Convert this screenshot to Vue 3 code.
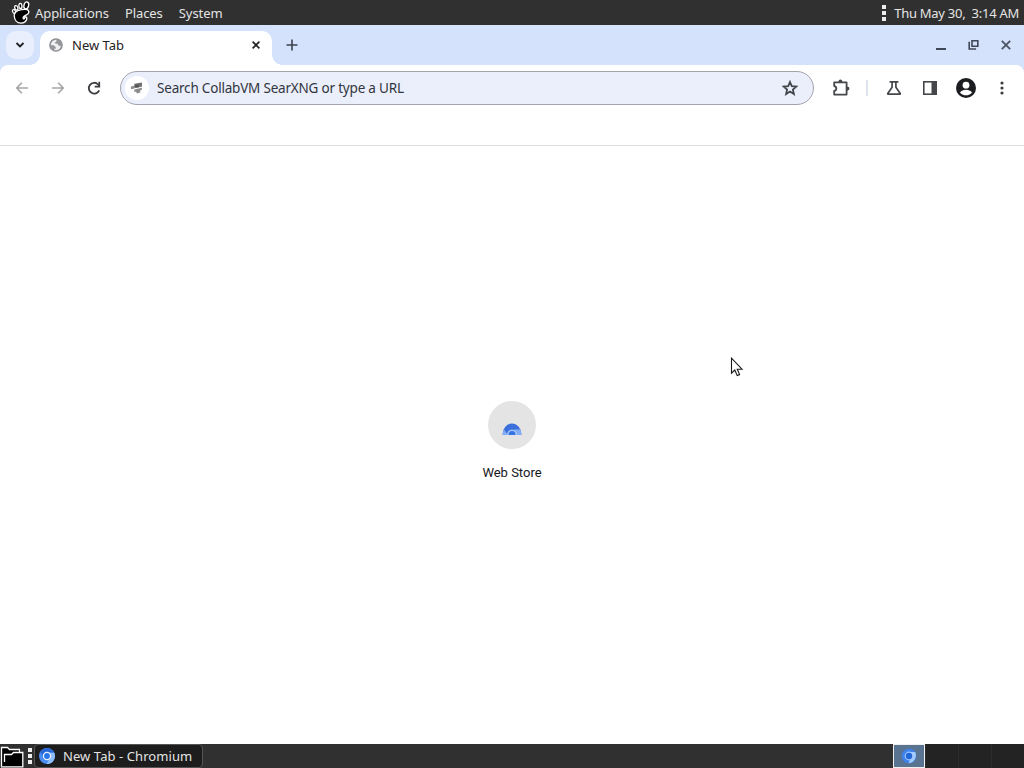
<script setup>
    import { ref } from 'vue';

    const menus = ["Applications", "Places", "System"];
    const clock = ref("Thu May 30,\u00a0 3:14 AM");
    const tabTitle = ref("New Tab");
    const placeholder = "Search CollabVM SearXNG or type a URL";
    const workspaces = [1, 2, 3, 4];
    const activeWorkspace = ref(1);
</script>

<template>
    <div class="desktop">
        <header class="panel">
            <svg class="foot" width="21" height="24" viewBox="0 0 21 24">
                <path d="M3.2 14.6C3 11 6.8 9.4 10.6 8.7C15 7.7 18.2 8.7 17.8 11.6C17.4 14 13 14 12.2 16.2C11.8 17.4 12.4 18.2 13.2 17.8C14 17 13.4 15.8 14.9 15.8C16.8 16.2 16 21.6 10.2 22.2C6 22.4 3.5 18.8 3.2 14.6Z" />
                <ellipse cx="3" cy="10.4" rx="1.4" ry="1.9" transform="rotate(-28 3 10.4)" />
                <ellipse cx="5.3" cy="6.8" rx="1.5" ry="2.3" transform="rotate(-18 5.3 6.8)" />
                <ellipse cx="9.4" cy="4.9" rx="1.5" ry="2.6" transform="rotate(-5 9.4 4.9)" />
                <ellipse cx="15.3" cy="4.4" rx="2.3" ry="3.5" transform="rotate(16 15.3 4.4)" />
            </svg>
            <nav class="menus">
                <span v-for="menu in menus" :key="menu">{{ menu }}</span>
            </nav>
            <div class="grip"><i></i><i></i><i></i></div>
            <span class="clock">{{ clock }}</span>
        </header>

        <section class="tabStrip">
            <button class="tabSearch">
                <svg width="10" height="8" viewBox="0 0 10 8"><path d="M1.5 2L5 5.5L8.5 2" fill="none" stroke="#1f2024" stroke-width="1.8" /></svg>
            </button>
            <div class="tab">
                <svg width="14" height="14" viewBox="0 0 14 14">
                    <circle cx="7" cy="7" r="6" fill="#eeeff0" stroke="#8c8f93" stroke-width="1.7" />
                    <path d="M1.4 7.3H4.8L6.8 9.2V10.7H5.2V12.8C2.8 12 1.2 10 1.4 7.3ZM7.7 1.3C10.8 1.6 12.9 4.1 12.7 7.3L10.9 8.3L9 7.1V5.7H6.8L5.8 4.7L7.3 3.6Z" fill="#94979b" />
                </svg>
                <span class="tabTitle">{{ tabTitle }}</span>
                <svg class="tabClose" width="8" height="8" viewBox="0 0 8 8"><path d="M.6.6L7.4 7.4M7.4.6L.6 7.4" stroke="#202124" stroke-width="1.6" /></svg>
            </div>
            <button class="newTab">
                <svg width="12" height="12" viewBox="0 0 12 12"><path d="M6 .5V11.5M.5 6H11.5" stroke="#3c4350" stroke-width="1.6" /></svg>
            </button>
            <div class="windowButtons">
                <svg width="12" height="12" viewBox="0 0 12 12"><path d="M1 10H11" stroke="#3f4757" stroke-width="2" /></svg>
                <svg width="12" height="12" viewBox="0 0 12 12"><path d="M4 1.7H9.8V7.3H4ZM1.2 2.8V10H8.1" fill="none" stroke="#3f4757" stroke-width="1.6" /></svg>
                <svg width="12" height="12" viewBox="0 0 12 12"><path d="M1.8 1.8L10.2 10.2M10.2 1.8L1.8 10.2" stroke="#4b5364" stroke-width="1.8" /></svg>
            </div>
        </section>

        <div class="toolbarArea">
            <section class="toolbar">
                <button class="tool">
                    <svg width="16" height="16" viewBox="0 0 16 16"><path d="M14 8H3M8 2.7L2.7 8L8 13.3" fill="none" stroke="#a5a6a9" stroke-width="1.6" /></svg>
                </button>
                <button class="tool">
                    <svg width="16" height="16" viewBox="0 0 16 16"><path d="M2 8H13M8 2.7L13.3 8L8 13.3" fill="none" stroke="#a5a6a9" stroke-width="1.6" /></svg>
                </button>
                <button class="tool">
                    <svg width="16" height="16" viewBox="0 0 16 16">
                        <path d="M13.2 10.3A5.4 5.4 0 1 1 12 4.3L13 5.6" fill="none" stroke="#3c3d40" stroke-width="1.8" />
                        <path d="M13.3 1.8V6.6H8.7" fill="none" stroke="#3c3d40" stroke-width="1.7" />
                    </svg>
                </button>
                <div class="omnibox">
                    <span class="engine">
                        <svg width="14" height="14" viewBox="0 0 14 14">
                            <path d="M4.4 2.8L8.8 2L12 1.6V5.6L8.4 6.6L4 6.8Z" fill="#6f7072" />
                            <path d="M.8 5.6L4.5 4.8V7.4L1 8.2ZM4.4 8.6L11.8 6.8V9L10 9.4L10.4 11.4L6.8 12.4L6.2 10.8H4Z" fill="#8c8d8f" />
                            <path d="M5.2 4.2L8.5 3.5V6.2L5.2 6.8Z" fill="#505153" />
                        </svg>
                    </span>
                    <span class="placeholder">{{ placeholder }}</span>
                    <svg class="star" width="16" height="16" viewBox="0 0 16 16"><path d="M8 2L9.8 6.2L14.3 6.6L10.9 9.6L11.9 14L8 11.6L4.1 14L5.1 9.6L1.7 6.6L6.2 6.2Z" fill="none" stroke="#45474d" stroke-width="1.8" /></svg>
                </div>
                <button class="tool extensions">
                    <svg width="20" height="20" viewBox="0 0 20 20">
                        <path d="M3.2 4.4H15.6V16.6H3.2V13C6 12.4 6 8.6 3.2 8Z" fill="none" stroke="#45474a" stroke-width="1.8" stroke-linejoin="round" />
                        <path d="M7.4 4.4A2 2.8 0 0 1 11.4 4.4ZM15.6 8.4A2.8 2 0 0 1 15.6 12.4Z" fill="#45474a" />
                    </svg>
                </button>
                <div class="divider"></div>
                <button class="tool">
                    <svg width="16" height="16" viewBox="0 0 16 16"><path d="M3.6 1.8H12.4M6.1 2V7.2L1.8 13.4Q1.5 14.2 2.4 14.2H13.6Q14.5 14.2 14.2 13.4L9.9 7.2V2" fill="none" stroke="#45474a" stroke-width="1.7" /></svg>
                </button>
                <button class="tool">
                    <svg width="16" height="16" viewBox="0 0 16 16"><rect x="1.8" y="1.8" width="12.4" height="12.4" fill="none" stroke="#45474a" stroke-width="1.6" /><path d="M9.5 2H14V14H9.5Z" fill="#45474a" /></svg>
                </button>
                <button class="tool">
                    <svg width="20" height="20" viewBox="0 0 20 20"><circle cx="10" cy="10" r="10" fill="#1c1d20" /><circle cx="10" cy="7.2" r="3.4" fill="#fff" /><path d="M4 14.4C5.3 12.6 7.5 11.8 10 11.8C12.5 11.8 14.7 12.6 16 14.4C14.7 16.2 12.5 17.3 10 17.3C7.5 17.3 5.3 16.2 4 14.4Z" fill="#fff" /></svg>
                </button>
                <button class="tool">
                    <svg width="4" height="16" viewBox="0 0 4 16" fill="#3c3d40"><circle cx="2" cy="3" r="1.6" /><circle cx="2" cy="8" r="1.6" /><circle cx="2" cy="13" r="1.6" /></svg>
                </button>
            </section>
        </div>
        <div class="bookmarksBar"></div>

        <main class="page">
            <a class="shortcut">
                <span class="tile">
                    <svg width="20" height="12" viewBox="0 0 20 12">
                        <path d="M.5 12A9.5 11.5 0 0 1 19.5 12Z" fill="#3b70dc" />
                        <path d="M.5 12Q.7 9 2 6.5L6 12ZM12 6.5H18.4Q19.4 9 19.5 12H14Z" fill="#82adf5" />
                        <path d="M5 12A5 5.5 0 0 1 15 12Z" fill="#a6c4f8" />
                        <path d="M6.5 12A3.5 4 0 0 1 13.5 12Z" fill="#3574e5" />
                    </svg>
                </span>
                <span class="label">Web Store</span>
            </a>
        </main>

        <footer class="taskbar">
            <svg class="folder" width="24" height="24" viewBox="0 0 24 24">
                <path d="M1.5 23V3.5H8.5L10.5 5.5H20.5V9.5H23V23Z" fill="#000" />
                <path d="M1.5 22.5V3.5H7.5L9.5 5.5H19.5V8.5" fill="none" stroke="#fff" stroke-width="1.3" />
                <path d="M4.5 18V10.5H11.5L13.5 8.5H22.8V22.8H1" fill="none" stroke="#fff" stroke-width="1.3" />
            </svg>
            <div class="grip"><i></i><i></i><i></i></div>
            <button class="task">
                <svg width="16" height="16" viewBox="0 0 16 16">
                    <circle cx="8" cy="8" r="8" fill="#4a8df2" />
                    <path d="M8 4.4H15.1A8 8 0 0 1 7.5 16L11.2 9.6Z" fill="#8fbefc" />
                    <path d="M1.2 4A8 8 0 0 1 15.1 4.4H8L4.8 9.6Z" fill="#2868d6" />
                    <circle cx="8" cy="8" r="4.2" fill="#e8f2ff" /><circle cx="8" cy="8" r="2.9" fill="#2875e8" />
                </svg>
                <span>{{ tabTitle }} - Chromium</span>
            </button>
            <div class="pager">
                <div v-for="n in workspaces" :key="n" class="workspace" :class="{ active: n == activeWorkspace }">
                    <svg v-if="n == activeWorkspace" width="16" height="16" viewBox="0 0 16 16">
                        <circle cx="8" cy="8" r="7.3" fill="#3e82ee" />
                        <path d="M8 4H14.2C16.5 9 12.8 14.8 7.5 15.3L10 10Z" fill="#a3ccff" />
                        <circle cx="8" cy="8" r="4.4" fill="#9fc7ff" /><circle cx="8" cy="8" r="3.2" fill="#2267d8" />
                    </svg>
                </div>
            </div>
        </footer>

        <svg class="cursor" width="14" height="20" viewBox="0 0 14 20"><path d="M1.5 1.2V16.2L4.8 13L7.2 18.6L9.6 17.6L7.3 12.2H12Z" fill="#fff" stroke="#17181a" stroke-width="1.1" /></svg>
    </div>
</template>

<style>
    body {
        margin: 0;
        overflow: hidden;
    }
</style>

<style scoped>
    .desktop {
        position: relative;
        width: 1024px;
        height: 768px;
        display: flex;
        flex-direction: column;
        background-color: white;
        font-family: "Noto Sans", sans-serif;
        font-size: 13px;
        color: #1f2023;
    }

    svg {
        display: block;
        flex-shrink: 0;
    }

    button {
        border: none;
        padding: 0;
        background: none;
        font: inherit;
        display: flex;
        align-items: center;
        justify-content: center;
    }

    .panel {
        height: 25px;
        box-sizing: border-box;
        padding: 0 5px 0 11px;
        display: flex;
        align-items: center;
        background-color: #303030;
        color: #e4e4e4;
        white-space: nowrap;
    }

    .foot {
        fill: #000;
        stroke: #fff;
        stroke-width: 1.3;
    }

    .menus {
        display: flex;
        gap: 16px;
        margin-left: 3px;
        padding-top: 1px;
        letter-spacing: -0.07px;
    }

    .grip {
        display: flex;
        flex-direction: column;
        gap: 2px;
    }

    .grip i {
        width: 4px;
        height: 4px;
        background-color: #ededed;
    }

    .panel .grip {
        margin-left: auto;
    }

    .clock {
        margin-left: 8px;
        padding-top: 1px;
        letter-spacing: -0.27px;
    }

    .tabStrip {
        height: 40px;
        display: flex;
        background-color: #d5e2fb;
    }

    .tabSearch {
        width: 28px;
        height: 28px;
        margin: 6px 0 0 6px;
        border-radius: 10px;
        background-color: #e9effd;
    }

    .tab {
        position: relative;
        width: 232px;
        height: 34px;
        box-sizing: border-box;
        margin: 6px 0 0 6px;
        padding: 0 12px 6px 9px;
        border-radius: 10px 10px 0 0;
        display: flex;
        align-items: center;
        background-color: white;
    }

    .tab::before,
    .tab::after {
        content: "";
        position: absolute;
        bottom: 0;
        width: 10px;
        height: 10px;
    }

    .tab::before {
        left: -10px;
        background: radial-gradient(circle at 0 0, transparent 9.5px, white 10px);
    }

    .tab::after {
        right: -10px;
        background: radial-gradient(circle at 100% 0, transparent 9.5px, white 10px);
    }

    .tabTitle {
        margin-left: 9px;
    }

    .tabClose {
        margin-left: auto;
    }

    .newTab {
        width: 28px;
        height: 28px;
        margin: 6px 0 0 6px;
    }

    .windowButtons {
        display: flex;
        gap: 20.5px;
        margin: 14px 12px 0 auto;
    }

    .toolbarArea {
        background-color: #d5e2fb;
    }

    .toolbar {
        height: 46px;
        padding-left: 4px;
        border-radius: 8px 8px 0 0;
        display: flex;
        align-items: center;
        background-color: white;
    }

    .tool {
        width: 36px;
        height: 34px;
    }

    .omnibox {
        width: 694px;
        height: 34px;
        box-sizing: border-box;
        margin-left: 8px;
        padding: 0 15px 0 4px;
        border: 1px solid #a2a4ab;
        border-radius: 17px;
        display: flex;
        align-items: center;
        background-color: #eaeffb;
    }

    .engine {
        width: 24px;
        height: 24px;
        border-radius: 12px;
        display: flex;
        align-items: center;
        justify-content: center;
        background-color: white;
    }

    .placeholder {
        margin-left: 8px;
        font-size: 13.5px;
        letter-spacing: -0.2px;
        color: #33363e;
    }

    .star {
        margin-left: auto;
    }

    .extensions {
        margin-left: 9px;
    }

    .divider {
        width: 2px;
        height: 16px;
        margin: 0 8px 0 7px;
        background-color: #dfe3eb;
    }

    .bookmarksBar {
        height: 34px;
        border-bottom: 1px solid #dedede;
    }

    .page {
        flex: 1;
        display: flex;
        flex-direction: column;
        align-items: center;
        justify-content: center;
    }

    .shortcut {
        display: flex;
        flex-direction: column;
        align-items: center;
        padding-bottom: 9px;
        font-family: Roboto, sans-serif;
        color: #17181a;
    }

    .tile {
        width: 48px;
        height: 48px;
        box-sizing: border-box;
        padding-top: 8px;
        border-radius: 50%;
        display: flex;
        align-items: center;
        justify-content: center;
        background-color: #e4e4e4;
    }

    .label {
        margin-top: 16px;
        line-height: 16px;
    }

    .taskbar {
        height: 24px;
        display: flex;
        align-items: center;
        background-color: #303030;
    }

    .taskbar .grip {
        margin: 0 2px 0 4px;
    }

    .task {
        width: 169px;
        height: 24px;
        box-sizing: border-box;
        padding-left: 4px;
        border: 1px solid #555;
        border-radius: 4px;
        justify-content: flex-start;
        background-color: #1d1d1d;
        color: #e4e4e4;
    }

    .task span {
        margin-left: 8px;
        letter-spacing: 0.08px;
    }

    .pager {
        display: flex;
        height: 24px;
        margin-left: auto;
        gap: 1px;
        background-color: #2c2c2c;
    }

    .workspace {
        width: 32px;
        box-sizing: border-box;
        display: flex;
        align-items: center;
        justify-content: center;
        background-color: #232323;
    }

    .workspace.active {
        border: 1px solid #f0f0f0;
        background-color: #587490;
    }

    .cursor {
        position: absolute;
        left: 730px;
        top: 357px;
    }
</style>
